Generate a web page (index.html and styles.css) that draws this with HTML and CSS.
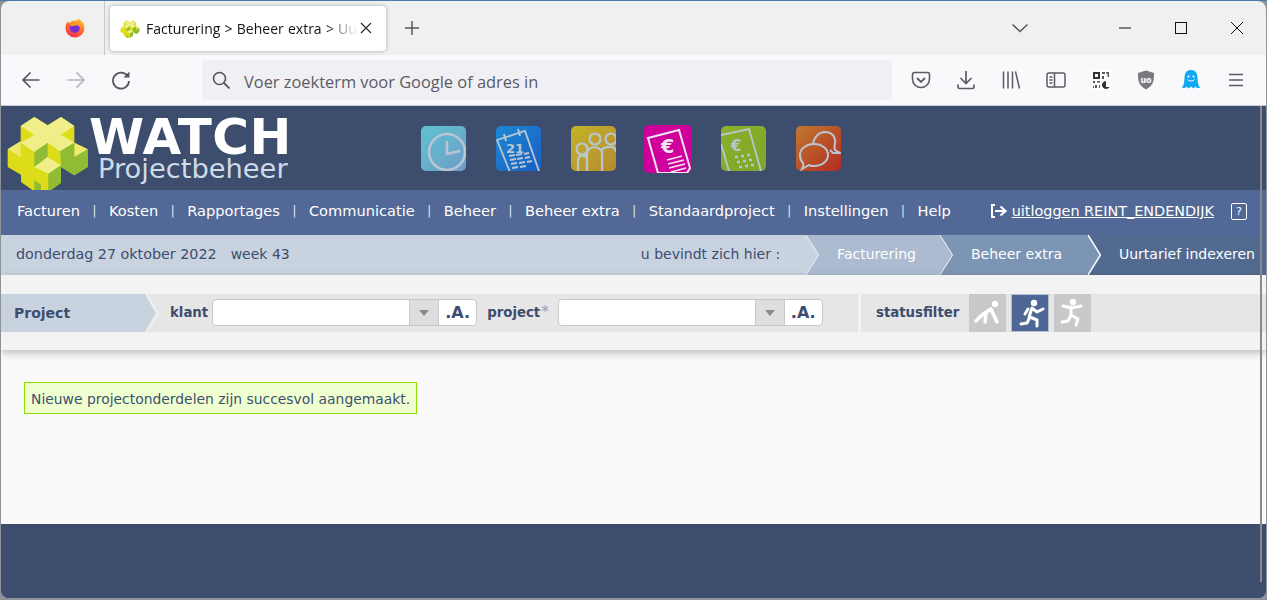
FILE: index.html
```html
<!DOCTYPE html>
<html lang="nl">
  <head>
    <meta charset="UTF-8" />
    <title>Facturering &gt; Beheer extra &gt; Uurtarief indexeren</title>
    <link rel="stylesheet" href="styles.css">
  </head>

  <body>
    <svg class="defs" width="0" height="0">
      <symbol id="cube" viewBox="0 0 270 240">
        <path d="M47 42L88 15l40 25 40-25 40 27v50l40 20v53l-40 25-40-25v47l-38 28H108l-20-2-40-28v-22L8 165V112l39-24z" fill="#dcdc18" />
        <path d="M47 42l41 26-41 24 41 28 40-28 37 26 43-26-40-24 40-26-40-27-40 25-40-25z" fill="#f0ee88" />
        <path d="M8 112l39-24v47z" fill="#eeea70" />
        <path d="M208 92l40 20-40 23z" fill="#eeea70" />
        <path d="M88 120l40-28v43l-40 30z" fill="#8fbc34" />
        <path d="M165 118l43-26v43l40-23v53l-40 25-40-25V160z" fill="#8fbc34" />
        <path d="M88 165l40-30 40 25-38 25z" fill="#f0ee88" />
        <path d="M130 185l38-25v52l-38 26z" fill="#8fbc34" />
        <path d="M88 205l20 13v22l-20-2z" fill="#8fbc34" />
      </symbol>
    </svg>
    <div class="window">
      <div class="tabbar">
        <div class="tab-start">
          <svg width="20" height="20" viewBox="0 0 20 20">
            <defs>
              <linearGradient id="ff" x1="0.7" y1="0" x2="0.2" y2="1">
                <stop offset="0" stop-color="#ffc02e" />
                <stop offset="0.5" stop-color="#ff6a2a" />
                <stop offset="1" stop-color="#f0285c" />
              </linearGradient>
            </defs>
            <path d="M13 0.500c3.500 2 6.500 5 6.500 9.500a9.500 9.500 0 0 1-19 0c0-2.500.8-5 2.500-7l1 2.500c1.500-2 4-3 6-3 1.500 0 3 0 3-2z" fill="url(#ff)" />
            <circle cx="9.800" cy="10" r="5" fill="#7b2fd0" />
            <path d="M5 8c1-3 5-4.500 8-3 2 1 2.500 3 2.500 5-1-2-3-3-5-2.500-2 .5-3 .5-5.500.5z" fill="#ff9a2a" />
          </svg>
        </div>
        <div class="tab">
          <svg width="21" height="19"><use href="#cube" /></svg>
          <span class="tab-title">Facturering &gt; Beheer extra &gt; Uurtarief indexeren</span>
          <svg class="tab-close" width="12" height="12" viewBox="0 0 12 12"><path d="M1 1l10 10M11 1L1 11" stroke="#2b2b33" stroke-width="1.200" /></svg>
        </div>
        <svg class="tab-plus" width="16" height="16" viewBox="0 0 16 16"><path d="M8 1v14M1 8h14" stroke="#55555e" stroke-width="1.500" /></svg>
        <svg class="tab-list" width="18" height="10" viewBox="0 0 18 10"><path d="M1.500 1.500L9 8.500l7.500-7" fill="none" stroke="#55555e" stroke-width="1.500" /></svg>
        <div class="win-buttons">
          <svg width="14" height="14" viewBox="0 0 14 14"><path d="M1 7h12" stroke="#111" stroke-width="1" /></svg>
          <svg width="14" height="14" viewBox="0 0 14 14"><rect x="1.500" y="1.500" width="11" height="11" fill="none" stroke="#111" stroke-width="1" /></svg>
          <svg width="14" height="14" viewBox="0 0 14 14"><path d="M1 1l12 12M13 1L1 13" stroke="#111" stroke-width="1" /></svg>
        </div>
      </div>

      <div class="navbar">
        <div class="nav-buttons">
          <svg width="20" height="20" viewBox="0 0 20 20"><path d="M18.500 10H2M9.500 2.500L2 10l7.500 7.500" fill="none" stroke="#55555e" stroke-width="1.700" /></svg>
          <svg width="20" height="20" viewBox="0 0 20 20"><path d="M1.500 10H18M10.500 2.500L18 10l-7.500 7.500" fill="none" stroke="#b5b5ba" stroke-width="1.700" /></svg>
          <svg width="20" height="20" viewBox="0 0 20 20"><path d="M16.500 6a8 8 0 1 0 1.500 5" fill="none" stroke="#55555e" stroke-width="1.800" /><path d="M18.500 1.500v6h-6z" fill="#55555e" /></svg>
        </div>
        <div class="urlbar">
          <svg width="18" height="18" viewBox="0 0 18 18"><circle cx="7.500" cy="7.500" r="6" fill="none" stroke="#55555e" stroke-width="1.600" /><path d="M12 12l5.500 5.500" stroke="#55555e" stroke-width="1.800" /></svg>
          <span>Voer zoekterm voor Google of adres in</span>
        </div>
        <div class="ext-buttons">
          <svg width="20" height="20" viewBox="0 0 20 20"><path d="M3.500 2.500h13a2 2 0 0 1 2 2V9a8.500 8.500 0 0 1-17 0V4.500a2 2 0 0 1 2-2z" fill="none" stroke="#5b5b66" stroke-width="1.600" /><path d="M6 8l4 4 4-4" fill="none" stroke="#5b5b66" stroke-width="1.800" /></svg>
          <svg width="20" height="20" viewBox="0 0 20 20"><path d="M10 1v12M4.500 8l5.500 5.500L15.500 8" fill="none" stroke="#5b5b66" stroke-width="1.700" /><path d="M2 14.500V17a1.500 1.500 0 0 0 1.500 1.500h13A1.500 1.500 0 0 0 18 17v-2.500" fill="none" stroke="#5b5b66" stroke-width="1.700" /></svg>
          <svg width="20" height="20" viewBox="0 0 20 20"><path d="M2.500 1.500v17M7 1.500v17M11.500 1.500v17M14.500 1.500l4 17" fill="none" stroke="#5b5b66" stroke-width="1.500" /></svg>
          <svg width="20" height="20" viewBox="0 0 20 20"><rect x="1" y="3" width="18" height="14" rx="2" fill="none" stroke="#5b5b66" stroke-width="1.500" /><path d="M8.500 3v14M3.500 7h3M3.500 10h3M3.500 13h3" stroke="#5b5b66" stroke-width="1.500" fill="none" /></svg>
          <svg class="ext-qr" width="20" height="20" viewBox="0 0 20 20">
            <rect width="20" height="20" fill="#fff" />
            <path d="M2 2h7v7H2zM4 4v3h3V4z" fill="#333" fill-rule="evenodd" />
            <path d="M11 2h3v2h-3zM15 2h3v5h-1.500V3.500H15zM11 6h2v3h-2zM2 11h2v2H2zM6 11h3v1.500H6zM4 15h2v3H4zM8 15h1v3H8zM2 16h1v2H2z" fill="#555" />
            <path d="M15 11a4 4 0 1 0 3.500 6H15z" fill="#333" />
          </svg>
          <svg width="20" height="20" viewBox="0 0 20 20">
            <path d="M10 0.500l8 2.500c0 7 0 12-8 16.500C2 15 2 10 2 3z" fill="#7a7a7e" />
            <text x="10" y="12.500" class="ublock-text">uo</text>
          </svg>
          <svg width="20" height="22" viewBox="0 0 20 22">
            <path d="M10 1c4.500 0 6.500 3.500 6.500 7.500 0 4 .5 7 2.500 10.500h-3l-1.500-1.500L12.500 19.500 10 17.500l-2.500 2L5.500 17.500 4 19H1c2-3.500 2.500-6.500 2.500-10.500S5.500 1 10 1z" fill="#10a8f4" />
            <circle cx="7.500" cy="7.500" r="1.100" fill="#fff" /><circle cx="12.500" cy="7.500" r="1.100" fill="#fff" />
            <path d="M6.500 10.500c1.500 2 5.500 2 7 0" fill="none" stroke="#fff" stroke-width="1" />
          </svg>
          <svg width="20" height="20" viewBox="0 0 20 20"><path d="M3 4.500h14M3 10h14M3 15.500h14" stroke="#5b5b66" stroke-width="1.700" /></svg>
        </div>
      </div>

      <div class="page">
        <header class="site-header">
          <div class="logo">
            <svg class="logo-cube" width="90" height="78" viewBox="0 0 270 234"><use href="#cube" width="270" height="240" /></svg>
            <div class="logo-text">
              <div class="logo-watch">WATCH</div>
              <div class="logo-sub">Projectbeheer</div>
            </div>
          </div>
          <div class="modules">
            <svg class="module" viewBox="0 0 45 45">
              <defs><linearGradient id="m1" x1="0" y1="0" x2="1" y2="1"><stop offset="0" stop-color="#5ec3d0" /><stop offset="1" stop-color="#6f9cc8" /></linearGradient></defs>
              <rect width="45" height="45" rx="5" fill="url(#m1)" />
              <circle cx="26" cy="26" r="18" fill="none" stroke="#b9c6d2" stroke-width="2.500" />
              <path d="M26 15v13l13-3" fill="none" stroke="#b9c6d2" stroke-width="2.500" />
            </svg>
            <svg class="module" viewBox="0 0 45 45">
              <defs><linearGradient id="m2" x1="0" y1="0" x2="1" y2="1"><stop offset="0" stop-color="#1c88d4" /><stop offset="1" stop-color="#1a5ec2" /></linearGradient></defs>
              <rect width="45" height="45" rx="5" fill="url(#m2)" />
              <path d="M1 14L29 5l15 43-28 3z" fill="none" stroke="#b9c6d2" stroke-width="1.800" />
              <path d="M8 8l2 7M22 3l2 7" stroke="#b9c6d2" stroke-width="2" />
              <text x="19" y="27" class="module-num">21</text>
              <path d="M13 30l6-1M20 29l6-1M28 28l5-1M14 34l6-1M21 33l6-1M29 32l5-1M15 38l6-1M23 37l6-1M31 36l5-1M16 42l6-1M24 41l6-1" stroke="#b9c6d2" stroke-width="2" />
            </svg>
            <svg class="module" viewBox="0 0 45 45">
              <defs><linearGradient id="m3" x1="0" y1="0" x2="1" y2="1"><stop offset="0" stop-color="#c4b428" /><stop offset="1" stop-color="#b48a30" /></linearGradient></defs>
              <rect width="45" height="45" rx="5" fill="url(#m3)" />
              <g fill="none" stroke="#b9c6d2" stroke-width="2.200">
                <circle cx="11" cy="23" r="5.500" /><circle cx="24" cy="13" r="5.500" /><circle cx="40" cy="13" r="5.500" />
                <path d="M7 45V35c0-7 9-7 9-1v11M16 45V28c0-9 15-9 15 0v17M31 24c2-4 14-5 14 2" />
              </g>
            </svg>
            <svg class="module module-big" viewBox="0 0 48 48">
              <rect width="48" height="48" rx="5" fill="#d0009c" />
              <path d="M4 13L35 5l11 38-3 5H14z" fill="none" stroke="#f0e8f0" stroke-width="2" />
              <text x="17" y="28" class="module-euro">€</text>
              <path d="M23 35l15-4M24 39l16-4M25 43l16-4M27 47l15-4" stroke="#f0e8f0" stroke-width="1.800" />
            </svg>
            <svg class="module" viewBox="0 0 45 45">
              <defs><linearGradient id="m5" x1="0" y1="0" x2="1" y2="1"><stop offset="0" stop-color="#8cb028" /><stop offset="1" stop-color="#7fa52c" /></linearGradient></defs>
              <rect width="45" height="45" rx="5" fill="url(#m5)" />
              <path d="M0 9L28 3l12 42M0 18l8 27" fill="none" stroke="#b9c6d2" stroke-width="1.800" />
              <text x="10" y="25" class="module-euro-small">€</text>
              <path d="M14 31h3M20 30h3M26 29h3M16 36h3M22 35h3M28 34h3M18 41h3M24 40h3M30 39h3" stroke="#b9c6d2" stroke-width="2.500" />
            </svg>
            <svg class="module" viewBox="0 0 45 45">
              <defs><linearGradient id="m6" x1="0" y1="0" x2="1" y2="1"><stop offset="0" stop-color="#c07830" /><stop offset="1" stop-color="#b42c20" /></linearGradient></defs>
              <rect width="45" height="45" rx="5" fill="url(#m6)" />
              <g fill="none" stroke="#b9c6d2" stroke-width="2">
                <path d="M17 18c1-7 6-12 12-12 7 0 11 5 10 11-.5 3-1 5 0 7l5 3h-7l-3-3" />
                <path d="M4 29c0-6 6-11 14-11s14 5 14 11-6 11-14 11c-2 0-4 0-5-1l-7 4c1-2 2-4 1-6-2-2-3-5-3-8z" />
              </g>
            </svg>
          </div>
        </header>

        <nav class="menu">
          <a>Facturen</a><i>|</i>
          <a>Kosten</a><i>|</i>
          <a>Rapportages</a><i>|</i>
          <a>Communicatie</a><i>|</i>
          <a>Beheer</a><i>|</i>
          <a>Beheer extra</a><i>|</i>
          <a>Standaardproject</a><i>|</i>
          <a>Instellingen</a><i>|</i>
          <a>Help</a>
          <div class="menu-right">
            <svg width="18" height="14" viewBox="0 0 18 14"><path d="M5 1H2v12h3" fill="none" stroke="#fff" stroke-width="2" /><path d="M5 7h10M10.500 2.500L15.500 7l-5 4.500" fill="none" stroke="#fff" stroke-width="2.200" /></svg>
            <a class="logout">uitloggen REINT_ENDENDIJK</a>
            <span class="help">?</span>
          </div>
        </nav>

        <div class="crumbs">
          <span class="crumbs-date">donderdag 27 oktober 2022</span>
          <span class="crumbs-week">week 43</span>
          <span class="crumbs-here">u bevindt zich hier :</span>
          <svg class="sep sep-1" viewBox="0 0 13 40"><path d="M0 0l13 20L0 40z" fill="#c9d3e0" /><path d="M0 0l12.500 20L0 40" fill="none" stroke="#eef1f5" stroke-width="1" /></svg>
          <span class="crumb crumb-1">Facturering</span>
          <svg class="sep sep-2" viewBox="0 0 13 40"><path d="M0 0l13 20L0 40z" fill="#acbbd0" /><path d="M0 0l12.500 20L0 40" fill="none" stroke="#eef1f5" stroke-width="1" /></svg>
          <span class="crumb crumb-2">Beheer extra</span>
          <svg class="sep sep-3" viewBox="0 0 13 40"><path d="M0 0l13 20L0 40z" fill="#7d95b5" /><path d="M0 0l12.500 20L0 40" fill="none" stroke="#fff" stroke-width="1.500" /></svg>
          <span class="crumb crumb-3">Uurtarief indexeren</span>
        </div>

        <div class="filter-wrap">
          <div class="filter">
            <div class="filter-main">
              <div class="filter-title">Project</div>
              <svg class="filter-tip" viewBox="0 0 14 38"><path d="M0 0h2l12 19L2 38H0z" fill="#f0f0f0" /><path d="M0 0l11 19L0 38z" fill="#c9d3e0" /></svg>
              <label class="klant-label">klant</label>
              <div class="combo">
                <span class="combo-input"></span>
                <span class="combo-arrow"></span>
                <span class="combo-a">.A.</span>
              </div>
              <label class="project-label">project<em>*</em></label>
              <div class="combo">
                <span class="combo-input"></span>
                <span class="combo-arrow"></span>
                <span class="combo-a">.A.</span>
              </div>
            </div>
            <div class="filter-status">
              <label>statusfilter</label>
              <span class="status-btn">
                <svg width="37" height="38" viewBox="0 0 37 38"><circle cx="26" cy="10" r="3.200" fill="#fff" /><path d="M22 15l-9 6-6 6M22 15l6 13M17 19l-1 9" fill="none" stroke="#fff" stroke-width="3.500" stroke-linecap="round" stroke-linejoin="round" /></svg>
              </span>
              <span class="status-btn active">
                <svg width="36" height="36" viewBox="0 0 36 36"><circle cx="22" cy="8" r="3.200" fill="#fff" /><path d="M20 13l-3 9M16 14l-3 5M20 13l5 4 6-3M18 22l7 3v6M17 24l-2 4-6 1" fill="none" stroke="#fff" stroke-width="3" stroke-linecap="round" stroke-linejoin="round" /></svg>
              </span>
              <span class="status-btn">
                <svg width="37" height="38" viewBox="0 0 37 38"><circle cx="19" cy="8" r="3.200" fill="#fff" /><path d="M17 13v8M9 12l8 2 10-2M17 21l7 4-2 6M17 21l-3 6-6 1" fill="none" stroke="#fff" stroke-width="3" stroke-linecap="round" stroke-linejoin="round" /></svg>
              </span>
            </div>
          </div>
        </div>

        <main class="content">
          <div class="message">Nieuwe projectonderdelen zijn succesvol aangemaakt.</div>
        </main>

        <footer class="site-footer"></footer>
        <div class="scrollbar"></div>
      </div>
    </div>
  </body>
</html>
```

FILE: styles.css
```css
html,
body {
  margin: 0;
  padding: 0;
  height: 100%;
  overflow: hidden;
}

body {
  background: #8d9299;
  border-top: 1px solid #4a7cab;
  box-sizing: border-box;
  font: 14px/20px "DejaVu Sans", Verdana, sans-serif;
}

.defs {
  display: block;
}

.window {
  position: relative;
  display: flex;
  flex-direction: column;
  height: 597px;
  margin: 0 1px;
  border-radius: 8px;
  overflow: hidden;
  background: #3d4d6e;
}

/* browser chrome */

.tabbar {
  display: flex;
  align-items: center;
  flex: none;
  height: 54px;
  background: #f0f0f0;
}

.tab-start {
  display: flex;
  align-items: center;
  justify-content: flex-end;
  box-sizing: border-box;
  width: 104px;
  height: 54px;
  padding-right: 19px;
  border-right: 1px solid #c8c8c8;
}

.tab {
  display: flex;
  align-items: center;
  width: 276px;
  height: 45px;
  margin-left: 5px;
  padding: 0 14px 0 10px;
  box-sizing: border-box;
  border-radius: 4px;
  background: #fff;
  box-shadow: 0 0 4px rgba(0, 0, 0, 0.3);
}

.tab-title {
  flex: 1;
  margin: 1px 0 0 5px;
  overflow: hidden;
  white-space: nowrap;
  font: 14px/20px "Open Sans", sans-serif;
  word-spacing: 0.600px;
  color: #15141a;
  -webkit-mask-image: linear-gradient(to right, #000 180px, transparent 212px);
  mask-image: linear-gradient(to right, #000 180px, transparent 212px);
}

.tab-plus {
  margin-left: 18px;
}

.tab-list {
  margin-left: 591px;
}

.win-buttons {
  display: flex;
  gap: 42px;
  margin-left: 89px;
}

.navbar {
  display: flex;
  align-items: center;
  flex: none;
  height: 51px;
  background: #f9f9fb;
  border-bottom: 1px solid #c9c9ce;
  box-sizing: border-box;
}

.nav-buttons {
  display: flex;
  gap: 25px;
  margin-left: 20px;
}

.urlbar {
  display: flex;
  align-items: center;
  gap: 14px;
  width: 690px;
  height: 40px;
  margin-left: 71px;
  padding-left: 10px;
  box-sizing: border-box;
  border-radius: 4px;
  background: #f0f0f4;
  font: 16.400px/20px "Open Sans", sans-serif;
  color: #5b5b66;
}

.urlbar span {
  margin-top: 3px;
}

.ext-buttons {
  display: flex;
  align-items: center;
  gap: 25px;
  margin-left: 19px;
}

.ublock-text {
  font: bold 8px "DejaVu Sans", sans-serif;
  fill: #fff;
  text-anchor: middle;
}

/* page */

.page {
  position: relative;
  display: flex;
  flex-direction: column;
  flex: 1;
  min-height: 0;
}

.site-header {
  display: flex;
  align-items: flex-start;
  flex: none;
  height: 84px;
  background: #3d4d6e;
}

.logo {
  display: flex;
  width: 420px;
  padding: 6px 0 0 4px;
  box-sizing: border-box;
}

.logo-text {
  margin: 5px 0 0 -6px;
}

.logo-watch {
  font: bold 50px/40px "DejaVu Sans", sans-serif;
  color: #fff;
  letter-spacing: 0.500px;
}

.logo-sub {
  margin: -3px 0 0 9px;
  font: 27.300px/30px "DejaVu Sans", sans-serif;
  color: #cfdbe8;
}

.modules {
  display: flex;
  align-items: center;
  gap: 30px;
  height: 45px;
  margin-top: 20px;
}

.module {
  width: 45px;
  height: 45px;
}

.module-big {
  width: 48px;
  height: 48px;
  margin: 0 -1px 0 -2px;
}

.module-num {
  font: bold 13px "DejaVu Sans", sans-serif;
  fill: #b9c6d2;
  text-anchor: middle;
}

.module-euro {
  font: bold 19px "DejaVu Sans", sans-serif;
  fill: #f0e8f0;
}

.module-euro-small {
  font: bold 15px "DejaVu Sans", sans-serif;
  fill: #b9c6d2;
}

.menu {
  display: flex;
  align-items: center;
  gap: 12.300px;
  flex: none;
  height: 45px;
  padding: 0 19px 3px 16px;
  box-sizing: border-box;
  background: #526896;
  color: #fff;
  font-size: 14.600px;
}

.menu i {
  font-style: normal;
  font-size: 13px;
  color: #d8dfeb;
}

.menu-right {
  display: flex;
  align-items: center;
  margin-left: auto;
}

.logout {
  margin-left: 4px;
  font-size: 14.400px;
  text-decoration: underline;
}

.help {
  width: 14px;
  height: 15px;
  margin-left: 17px;
  border: 1px solid #fff;
  border-radius: 2px;
  font-size: 11px;
  line-height: 15px;
  text-align: center;
}

.crumbs {
  display: flex;
  align-items: center;
  flex: none;
  height: 40px;
  padding: 0 0 2px 15px;
  box-sizing: border-box;
  background: #c9d3e0;
  color: #3d4d6e;
}

.crumbs-date {
  font-size: 14.300px;
}

.crumbs-week {
  margin-left: 14px;
}

.crumbs-here {
  margin-left: auto;
  margin-right: 26px;
}

.sep {
  flex: none;
  width: 13px;
  height: 40px;
  margin-bottom: -2px;
}

.sep-1 {
  background: #acbbd0;
}

.sep-2 {
  background: #7d95b5;
}

.sep-3 {
  background: #526a90;
}

.crumb {
  display: flex;
  align-items: center;
  height: 40px;
  margin-bottom: -2px;
  padding: 0 26px 2px 18px;
  box-sizing: border-box;
  color: #fff;
}

.crumb-1 {
  padding-right: 24px;
  background: #acbbd0;
}

.crumb-2 {
  background: #7d95b5;
}

.crumb-3 {
  padding-right: 11px;
  background: #526a90;
}

.filter-wrap {
  flex: none;
  height: 75px;
  padding-top: 19px;
  box-sizing: border-box;
  background: #f3f3f3;
  box-shadow: 0 3px 8px rgba(0, 0, 0, 0.25);
  z-index: 1;
}

.filter {
  display: flex;
  gap: 3px;
  height: 38px;
}

.filter-main,
.filter-status {
  display: flex;
  align-items: center;
  height: 38px;
  background: #e6e6e6;
  color: #3d4d6e;
  font-size: 13.300px;
  font-weight: bold;
}

.filter-main {
  width: 857px;
  flex: none;
}

.filter-status {
  flex: 1;
  padding-left: 15px;
}

.filter-title {
  width: 144px;
  height: 38px;
  padding-left: 13px;
  box-sizing: border-box;
  background: #c9d3e0;
  font-size: 14px;
  line-height: 38px;
}

.filter-tip {
  flex: none;
  width: 14px;
  height: 38px;
}

.klant-label {
  margin-left: 11px;
}

.project-label {
  margin: 0 9px 0 10px;
}

.project-label em {
  margin-left: 1px;
  font-style: normal;
  font-weight: normal;
  font-size: 15px;
  line-height: 14px;
  color: #8fa0b8;
}

.combo {
  display: flex;
  flex: none;
  width: 265px;
  height: 27px;
  margin-top: -1px;
  box-sizing: border-box;
  border: 1px solid #c8c8c8;
  border-radius: 4px;
  background: #fff;
  overflow: hidden;
}

.klant-label + .combo {
  margin-left: 4px;
}

.combo-input {
  flex: 1;
}

.combo-arrow {
  display: flex;
  align-items: center;
  justify-content: center;
  width: 30px;
  box-sizing: border-box;
  background: #dedede;
  border: solid #c8c8c8;
  border-width: 0 1px;
}

.combo-arrow::after {
  content: "";
  border: 5px solid transparent;
  border-top: 6px solid #8a8a8a;
  margin-top: 5px;
}

.combo-a {
  width: 37px;
  text-align: center;
  line-height: 25px;
  font-size: 16px;
  color: #3d4d6e;
}

.filter-status label {
  margin-right: 10px;
}

.status-btn {
  display: flex;
  box-sizing: border-box;
  width: 37px;
  height: 38px;
  margin-right: 5px;
  background: #c9c9c9;
}

.status-btn.active {
  width: 38px;
  background: #4f6794;
  border: 1px solid #b5bfce;
}

.content {
  flex: 1;
  padding: 32px 23px 0;
  background: #fafafa;
}

.message {
  width: fit-content;
  height: 32px;
  padding: 0 6px;
  box-sizing: border-box;
  border: 1px solid #8fe000;
  background: #f0ffd0;
  color: #3d5070;
  font-size: 13.900px;
  line-height: 32px;
}

.site-footer {
  flex: none;
  height: 74px;
  background: #3d4d6e;
}

.scrollbar {
  position: absolute;
  top: 0;
  right: 4px;
  width: 2px;
  height: 476px;
  background: #8a8a8a;
  z-index: 2;
}
```
